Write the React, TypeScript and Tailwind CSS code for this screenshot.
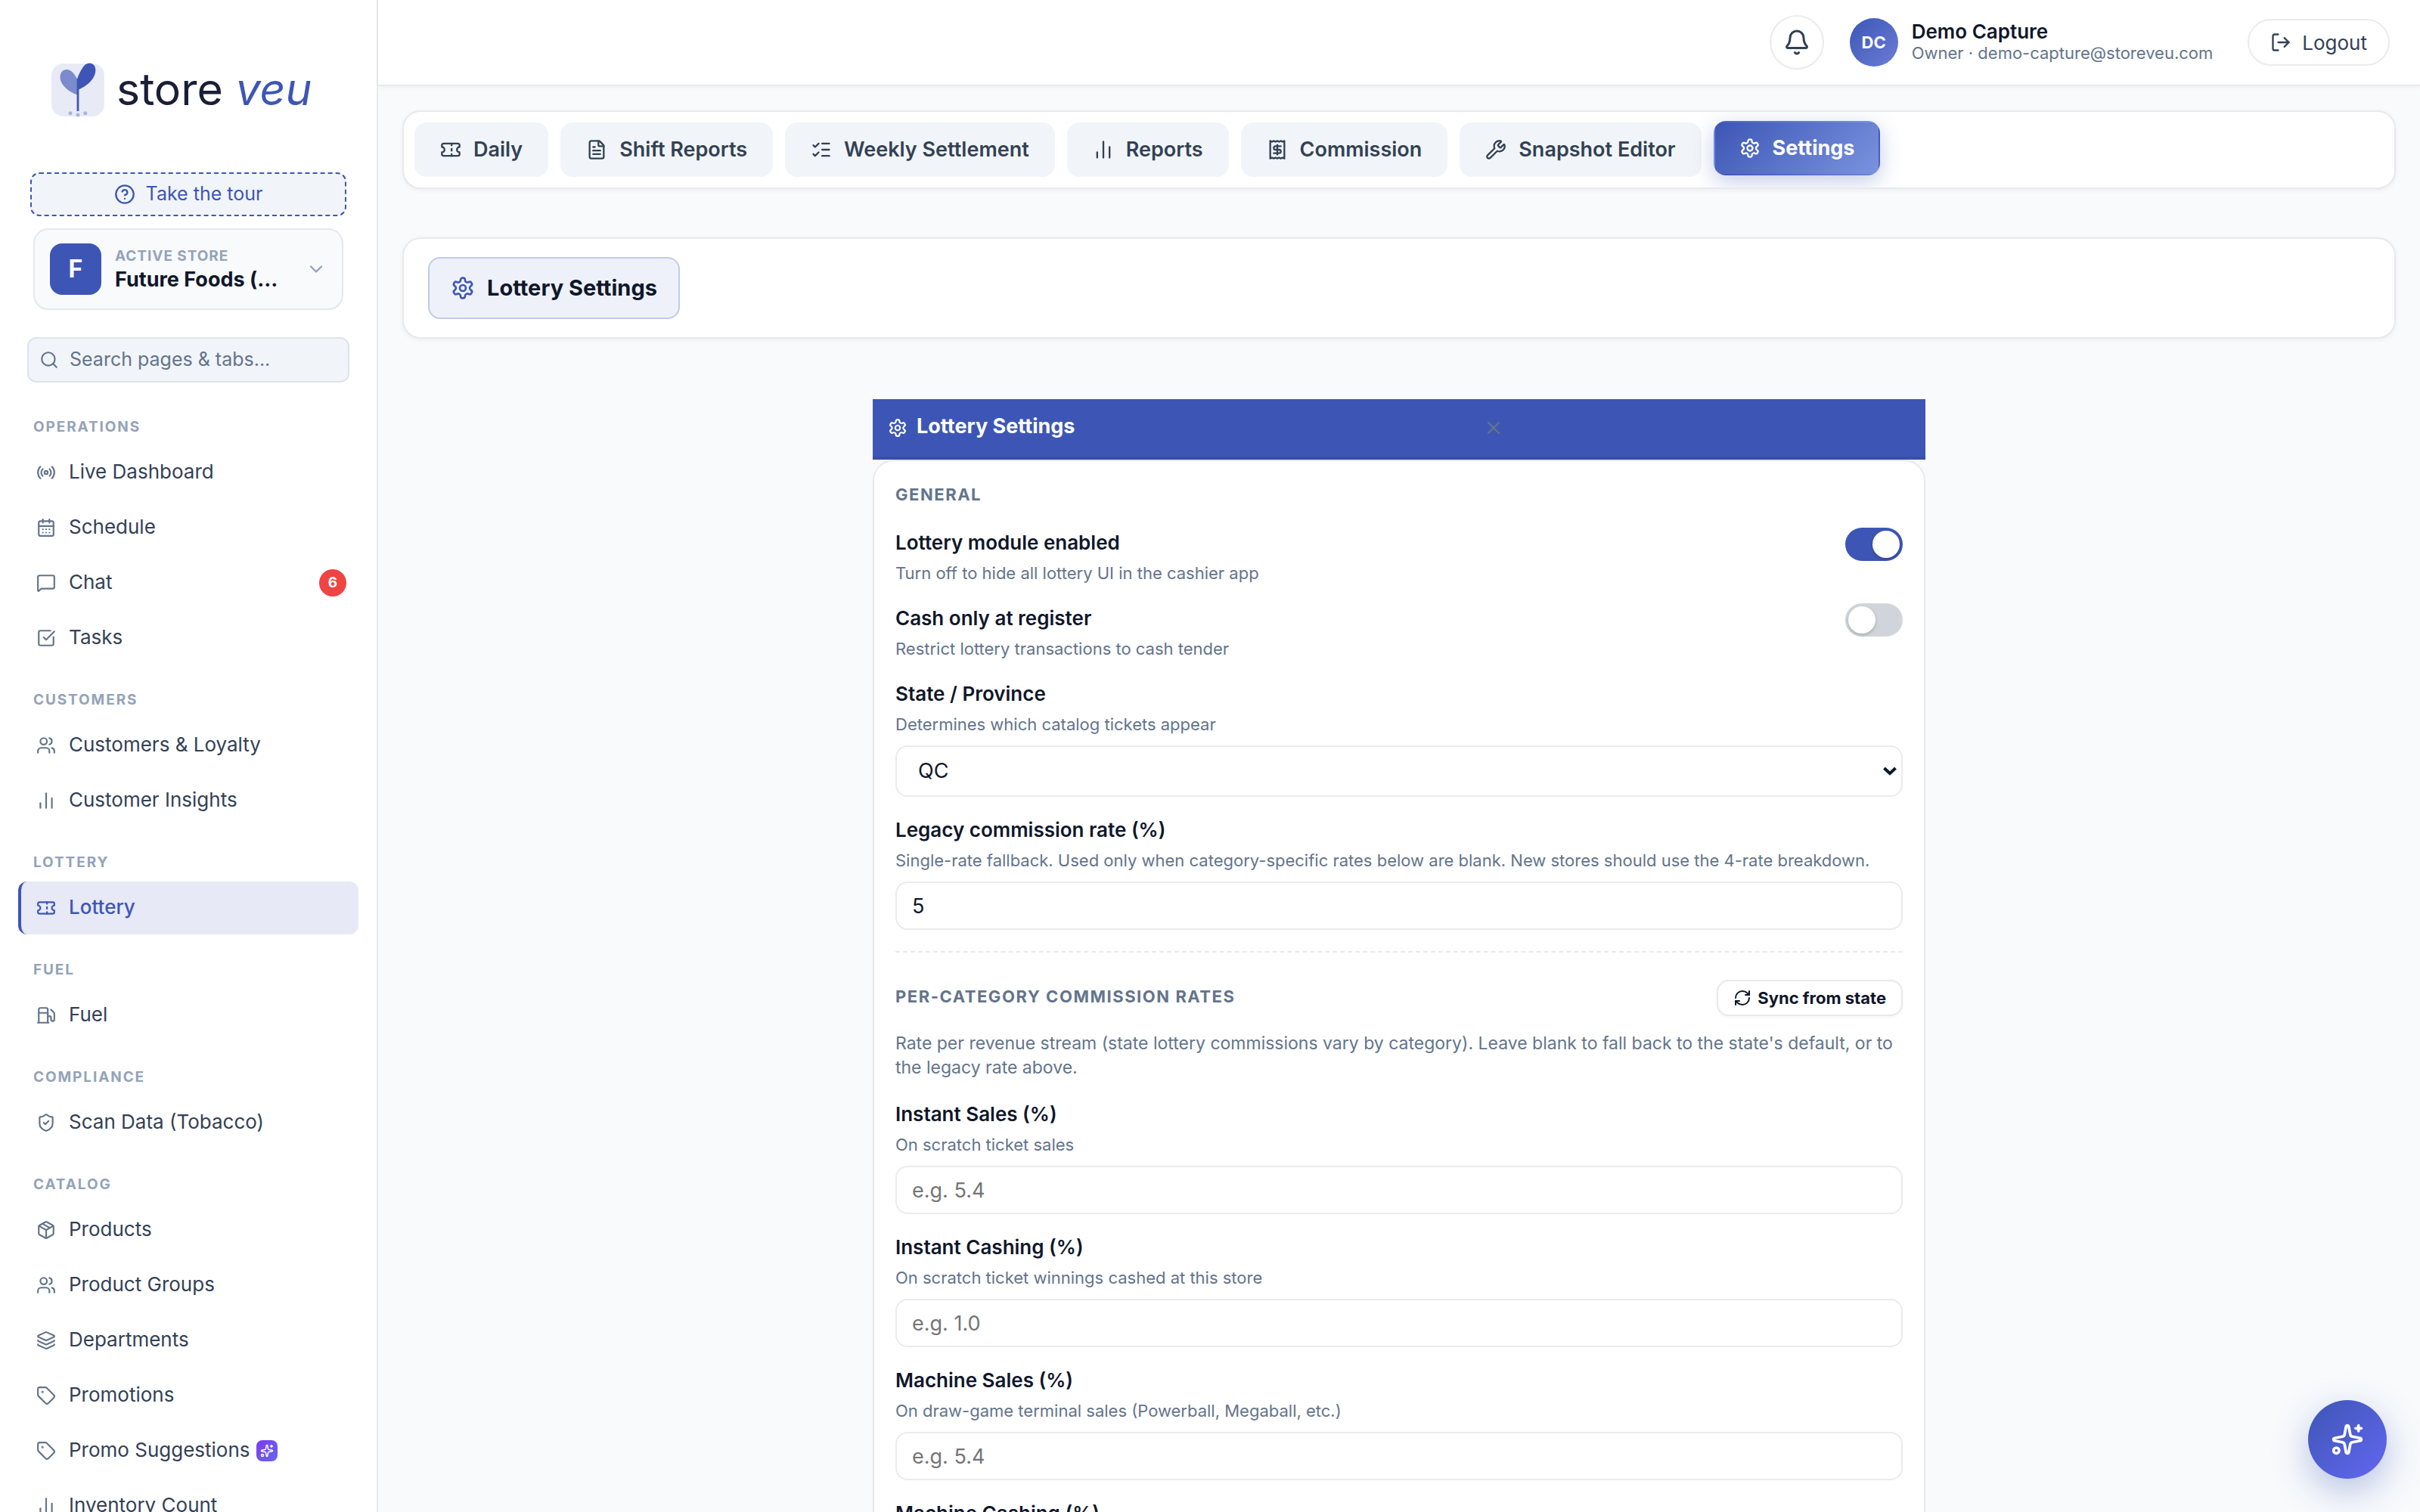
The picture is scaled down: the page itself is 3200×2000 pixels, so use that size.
import type { ReactNode } from "react";
import {
  Bell,
  CalendarDays,
  ChartNoAxesColumn,
  ChevronDown,
  CircleQuestionMark,
  FileText,
  Fuel,
  Layers,
  ListChecks,
  MessageSquare,
  Package,
  Radio,
  RefreshCw,
  Search,
  ShieldCheck,
  Sparkles,
  SquareCheckBig,
  Tag,
  Users,
  Wrench,
  X,
} from "lucide-react";

type IconType = (props: { size?: number; className?: string; strokeWidth?: number }) => ReactNode;

function makeIcon(body: ReactNode): IconType {
  return ({ size = 24, className, strokeWidth = 2 }) => (
    <svg
      width={size}
      height={size}
      viewBox="0 0 24 24"
      fill="none"
      stroke="currentColor"
      strokeWidth={strokeWidth}
      strokeLinecap="round"
      strokeLinejoin="round"
      className={className}
      aria-hidden="true"
    >
      {body}
    </svg>
  );
}

const TicketIcon = makeIcon(
  <>
    <path d="M2 9a3 3 0 0 1 0 6v2a2 2 0 0 0 2 2h16a2 2 0 0 0 2-2v-2a3 3 0 0 1 0-6V7a2 2 0 0 0-2-2H4a2 2 0 0 0-2 2Z" />
    <path d="M13 5v2" />
    <path d="M13 17v2" />
    <path d="M13 11v2" />
  </>,
);

const ReceiptIcon = makeIcon(
  <>
    <path d="M4 2v20l2-1 2 1 2-1 2 1 2-1 2 1 2-1 2 1V2l-2 1-2-1-2 1-2-1-2 1-2-1-2 1Z" />
    <path d="M16 8h-6a2 2 0 1 0 0 4h4a2 2 0 1 1 0 4H8" />
    <path d="M12 17.5v-11" />
  </>,
);

const GearIcon = makeIcon(
  <>
    <path d="M12.22 2h-.44a2 2 0 0 0-2 2v.18a2 2 0 0 1-1 1.73l-.43.25a2 2 0 0 1-2 0l-.15-.08a2 2 0 0 0-2.73.73l-.22.38a2 2 0 0 0 .73 2.73l.15.1a2 2 0 0 1 1 1.72v.51a2 2 0 0 1-1 1.74l-.15.09a2 2 0 0 0-.73 2.73l.22.38a2 2 0 0 0 2.73.73l.15-.08a2 2 0 0 1 2 0l.43.25a2 2 0 0 1 1 1.73V20a2 2 0 0 0 2 2h.44a2 2 0 0 0 2-2v-.18a2 2 0 0 1 1-1.73l.43-.25a2 2 0 0 1 2 0l.15.08a2 2 0 0 0 2.73-.73l.22-.39a2 2 0 0 0-.73-2.73l-.15-.08a2 2 0 0 1-1-1.74v-.5a2 2 0 0 1 1-1.74l.15-.09a2 2 0 0 0 .73-2.73l-.22-.38a2 2 0 0 0-2.73-.73l-.15.08a2 2 0 0 1-2 0l-.43-.25a2 2 0 0 1-1-1.73V4a2 2 0 0 0-2-2z" />
    <circle cx="12" cy="12" r="3" />
  </>,
);

const LogOutIcon = makeIcon(
  <>
    <path d="m16 17 5-5-5-5" />
    <path d="M21 12H9" />
    <path d="M9 21H5a2 2 0 0 1-2-2V5a2 2 0 0 1 2-2h4" />
  </>,
);

type NavItem = { label: string; icon: IconType; active?: boolean; count?: number; ai?: boolean };

const sections: { title: string; items: NavItem[] }[] = [
  {
    title: "OPERATIONS",
    items: [
      { label: "Live Dashboard", icon: Radio },
      { label: "Schedule", icon: CalendarDays },
      { label: "Chat", icon: MessageSquare, count: 6 },
      { label: "Tasks", icon: SquareCheckBig },
    ],
  },
  {
    title: "CUSTOMERS",
    items: [
      { label: "Customers & Loyalty", icon: Users },
      { label: "Customer Insights", icon: ChartNoAxesColumn },
    ],
  },
  { title: "LOTTERY", items: [{ label: "Lottery", icon: TicketIcon, active: true }] },
  { title: "FUEL", items: [{ label: "Fuel", icon: Fuel }] },
  { title: "COMPLIANCE", items: [{ label: "Scan Data (Tobacco)", icon: ShieldCheck }] },
  {
    title: "CATALOG",
    items: [
      { label: "Products", icon: Package },
      { label: "Product Groups", icon: Users },
      { label: "Departments", icon: Layers },
      { label: "Promotions", icon: Tag },
      { label: "Promo Suggestions", icon: Tag, ai: true },
      { label: "Inventory Count", icon: ChartNoAxesColumn },
    ],
  },
];

const tabs: { label: string; icon: IconType; active?: boolean }[] = [
  { label: "Daily", icon: TicketIcon },
  { label: "Shift Reports", icon: FileText },
  { label: "Weekly Settlement", icon: ListChecks },
  { label: "Reports", icon: ChartNoAxesColumn },
  { label: "Commission", icon: ReceiptIcon },
  { label: "Snapshot Editor", icon: Wrench },
  { label: "Settings", icon: GearIcon, active: true },
];

const rates = [
  { id: "instant-sales", label: "Instant Sales (%)", hint: "On scratch ticket sales", placeholder: "e.g. 5.4" },
  { id: "instant-cashing", label: "Instant Cashing (%)", hint: "On scratch ticket winnings cashed at this store", placeholder: "e.g. 1.0" },
  { id: "machine-sales", label: "Machine Sales (%)", hint: "On draw-game terminal sales (Powerball, Megaball, etc.)", placeholder: "e.g. 5.4" },
  { id: "machine-cashing", label: "Machine Cashing (%)", hint: "On draw-game winnings cashed at this store", placeholder: "e.g. 1.0" },
];

function LogoMark() {
  return (
    <svg width="70" height="70" viewBox="0 0 70 70" className="shrink-0 overflow-visible" aria-hidden="true">
      <rect width="70" height="70" rx="16" fill="#e8eaf5" />
      <path d="M34.5 41.5C24 38 11.5 29 11.5 18C11.5 12 15 8 20 8C27 8 31 15 34.5 21Z" fill="#7b8bcb" />
      <path d="M34.5 35V19C38 10 43 -0.5 50.3 -0.5C55 -0.5 58.3 3 58.3 9C58.3 20 47 30 34.5 35Z" fill="#3d56b5" />
      <path d="M35 20V63" stroke="#3d56b5" strokeWidth="2.8" />
      <circle cx="25" cy="65.8" r="2.5" fill="#a9b4de" />
      <circle cx="35" cy="67.9" r="2.5" fill="#a9b4de" />
      <circle cx="44.8" cy="65.8" r="2.5" fill="#a9b4de" />
    </svg>
  );
}

function Sidebar() {
  return (
    <aside className="flex w-[500px] shrink-0 flex-col overflow-hidden border-r-2 border-[#e9e9eb] bg-white px-6">
      <div className="flex h-[154px] shrink-0 items-end gap-4 pl-11">
        <LogoMark />
        <p className="text-[59px] leading-[72px] whitespace-nowrap text-[#1a1f36]">
          store <em className="text-[#3d56b5]">veu</em>
        </p>
      </div>

      <button
        type="button"
        className="mx-4 mt-[74px] flex h-[58px] shrink-0 items-center justify-center gap-3.5 rounded-xl border-2 border-dashed border-[#3d56b5] bg-[#f1f5f9] text-[25px] text-[#3d56b5]"
      >
        <CircleQuestionMark size={28} />
        Take the tour
      </button>

      <button
        type="button"
        className="mx-5 mt-4 flex h-27 shrink-0 items-center gap-[18px] rounded-[20px] border-2 border-[#e6e7ea] bg-[#f8fafc] px-5 text-left"
      >
        <span className="grid size-17 shrink-0 place-items-center rounded-2xl bg-[#3d56b5] text-[32px] font-bold text-white">F</span>
        <span className="min-w-0 flex-1">
          <span className="block text-[19px] leading-7 font-bold tracking-wider text-[#94a3b8]">ACTIVE STORE</span>
          <span className="block truncate text-[27px] leading-[34px] font-bold text-[#0f172a]">Future Foods (…</span>
        </span>
        <ChevronDown size={28} className="shrink-0 text-[#94a3b8]" />
      </button>

      <label className="mx-3 mt-9 flex h-[60px] shrink-0 items-center gap-3.5 rounded-xl border-2 border-[#dfe3e8] bg-[#f1f5f9] px-3.5 text-[#64748b]">
        <Search size={26} className="shrink-0" />
        <input
          type="search"
          aria-label="Search pages and tabs"
          placeholder="Search pages & tabs..."
          className="w-full bg-transparent text-[25px] outline-none placeholder:text-[#64748b]"
        />
      </label>

      <nav className="mt-3">
        {sections.map((section) => (
          <section key={section.title}>
            <h2 className="px-5 pt-[35px] pb-[13px] text-[19px] leading-6 font-bold tracking-widest text-[#94a3b8]">
              {section.title}
            </h2>
            <ul className="flex flex-col gap-[3px]">
              {section.items.map(({ label, icon: Icon, active, count, ai }) => (
                <li key={label}>
                  <a
                    href="#"
                    className={
                      active
                        ? "flex h-[70px] items-center rounded-xl border-l-4 border-[#3d56b5] bg-[#e7e9f6] pr-4 pl-5 text-[26px] font-medium text-[#3d56b5]"
                        : "flex h-[70px] items-center rounded-xl border-l-4 border-transparent pr-4 pl-5 text-[26px] text-[#334155]"
                    }
                  >
                    <Icon size={26} className={active ? "shrink-0" : "shrink-0 text-[#64748b]"} />
                    <span className="pb-1 pl-[17px]">{label}</span>
                    {ai && (
                      <span className="ml-2 grid size-7 place-items-center rounded-lg bg-linear-135 from-[#7c3aed] to-[#6366f1] text-white">
                        <Sparkles size={18} />
                      </span>
                    )}
                    {count && (
                      <span className="ml-auto grid size-9 place-items-center rounded-full bg-[#ef4444] text-[19px] font-bold text-white">
                        {count}
                      </span>
                    )}
                  </a>
                </li>
              ))}
            </ul>
          </section>
        ))}
      </nav>
    </aside>
  );
}

function TopBar() {
  return (
    <header className="z-10 flex h-[114px] shrink-0 items-center justify-end border-b-2 border-[#e9e9eb] bg-white pr-10 shadow-[0_2px_6px_rgba(15,23,42,0.04)]">
      <button
        type="button"
        aria-label="Notifications"
        className="grid size-18 place-items-center rounded-full border-2 border-[#ebebeb] text-[#334155]"
      >
        <Bell size={36} />
      </button>
      <div className="ml-[34px] grid size-16 place-items-center rounded-full bg-linear-135 from-[#3d56b5] to-[#6b7dd6] text-[22px] font-bold text-white">
        DC
      </div>
      <div className="ml-[18px]">
        <p className="text-[26px] leading-7 font-semibold text-[#0f172a]">Demo Capture</p>
        <p className="text-[22px] leading-7 text-[#64748b]">Owner · demo-capture@storeveu.com</p>
      </div>
      <button
        type="button"
        className="ml-[46px] flex h-[62px] items-center gap-3.5 rounded-full border-2 border-[#ebebeb] px-7 text-[26px] text-[#334155]"
      >
        <LogOutIcon size={28} />
        Logout
      </button>
    </header>
  );
}

function TabBar() {
  return (
    <div className="flex gap-4 overflow-hidden rounded-3xl border-2 border-[#e9e9eb] bg-white p-3.5 shadow-[0_2px_6px_rgba(15,23,42,0.05)]">
      {tabs.map(({ label, icon: Icon, active }) => (
        <button
          key={label}
          type="button"
          className={
            active
              ? "flex h-18 -translate-y-0.5 items-center gap-4 rounded-2xl border-2 border-transparent bg-linear-135 from-[#3d56b5] to-[#7b93de] px-8 text-[27px] font-bold text-white shadow-[0_8px_28px_rgba(61,86,181,0.3)]"
              : "flex h-18 items-center gap-4 rounded-2xl border-2 border-transparent bg-[#f1f5f9] px-8 text-[27px] font-semibold text-[#334155]"
          }
        >
          <Icon size={28} />
          {label}
        </button>
      ))}
    </div>
  );
}

function Toggle({ id, label, hint, on }: { id: string; label: string; hint: string; on: boolean }) {
  return (
    <div className="flex items-start justify-between">
      <div>
        <label htmlFor={id} className="block text-[26px] leading-10 font-semibold text-[#0f172a]">
          {label}
        </label>
        <p className="mt-1 text-[22px] leading-8 text-[#64748b]">{hint}</p>
      </div>
      <span className="relative flex">
        <input
          id={id}
          type="checkbox"
          role="switch"
          defaultChecked={on}
          className="peer h-11 w-[76px] cursor-pointer appearance-none rounded-full bg-[#d1d5db] checked:bg-[#3d56b5]"
        />
        <span className="pointer-events-none absolute top-1 left-1 size-9 rounded-full bg-white shadow-[0_2px_4px_rgba(0,0,0,0.2)] peer-checked:left-9" />
      </span>
    </div>
  );
}

function Field({ id, label, hint, children }: { id: string; label: string; hint: string; children: ReactNode }) {
  return (
    <div>
      <label htmlFor={id} className="block text-[26px] leading-10 font-semibold text-[#0f172a]">
        {label}
      </label>
      <p className="mt-1 mb-3 text-[22px] leading-8 text-[#64748b]">{hint}</p>
      {children}
    </div>
  );
}

function TextBox({ id, value, placeholder }: { id: string; value?: string; placeholder?: string }) {
  return (
    <input
      id={id}
      type="text"
      inputMode="decimal"
      defaultValue={value}
      placeholder={placeholder}
      className="block h-16 w-full rounded-2xl border-2 border-[#ebebeb] bg-white px-5 text-[27px] text-[#0f172a] outline-none placeholder:text-[#757575]"
    />
  );
}

function SettingsPanel() {
  return (
    <section className="mx-auto mt-20 w-full max-w-[1392px]">
      <header className="border-b-4 border-[#394fa8] bg-[#3d56b5]">
        <div className="flex h-[76px] w-3/5 items-center justify-between pl-5">
          <h2 className="flex items-center gap-3 text-[27px] font-bold text-white">
            <GearIcon size={26} />
            <span className="pb-1">Lottery Settings</span>
          </h2>
          <button type="button" aria-label="Close" className="text-[#64748b]">
            <X size={28} />
          </button>
        </div>
      </header>

      <form className="rounded-[28px] border-2 border-[#e9e9eb] bg-white p-7">
        <h3 className="mb-7 text-[22px] leading-8 font-bold tracking-[0.07em] text-[#64748b]">GENERAL</h3>
        <div className="flex flex-col gap-6">
          <Toggle id="module-enabled" label="Lottery module enabled" hint="Turn off to hide all lottery UI in the cashier app" on />
          <Toggle id="cash-only" label="Cash only at register" hint="Restrict lottery transactions to cash tender" on={false} />
          <Field id="state" label="State / Province" hint="Determines which catalog tickets appear">
            <div className="relative">
              <select
                id="state"
                defaultValue="QC"
                className="block h-17 w-full appearance-none rounded-2xl border-2 border-[#ebebeb] bg-white px-7 text-[27px] text-[#0f172a] outline-none"
              >
                <option>QC</option>
                <option>ON</option>
              </select>
              <svg
                width="18"
                height="12"
                viewBox="0 0 18 12"
                className="pointer-events-none absolute top-7 right-2"
                aria-hidden="true"
              >
                <path d="M1.5 2L9 9L16.5 2" fill="none" stroke="#0f172a" strokeWidth="4" />
              </svg>
            </div>
          </Field>
          <Field
            id="legacy-rate"
            label="Legacy commission rate (%)"
            hint="Single-rate fallback. Used only when category-specific rates below are blank. New stores should use the 4-rate breakdown."
          >
            <TextBox id="legacy-rate" value="5" />
          </Field>
        </div>

        <div className="mt-7 flex items-center justify-between border-t-2 border-dashed border-[#e9e9eb] pt-9">
          <h3 className="pb-1 text-[22px] leading-8 font-bold tracking-[0.07em] text-[#64748b]">PER-CATEGORY COMMISSION RATES</h3>
          <button
            type="button"
            className="flex h-12 items-center gap-2 rounded-2xl border-2 border-[#e9e9eb] bg-white px-5 text-[22px] font-bold text-[#0f172a] shadow-[0_2px_4px_rgba(15,23,42,0.04)]"
          >
            <RefreshCw size={24} />
            Sync from state
          </button>
        </div>
        <p className="mt-5 mb-[26px] text-[23px] leading-8 text-[#64748b]">
          Rate per revenue stream (state lottery commissions vary by category). Leave blank to fall back to the state's default, or to
          the legacy rate above.
        </p>
        <div className="flex flex-col gap-6">
          {rates.map((rate) => (
            <Field key={rate.id} id={rate.id} label={rate.label} hint={rate.hint}>
              <TextBox id={rate.id} placeholder={rate.placeholder} />
            </Field>
          ))}
        </div>
      </form>
    </section>
  );
}

export default function App() {
  return (
    <div className="flex h-screen overflow-hidden bg-[#f8fafc] font-['Inter',sans-serif]">
      <Sidebar />
      <div className="flex min-w-0 flex-1 flex-col">
        <TopBar />
        <main className="flex-1 overflow-y-auto p-8 [scrollbar-width:none]">
          <TabBar />
          <div className="mt-16 rounded-3xl border-2 border-[#e9e9eb] bg-white px-8 py-6 shadow-[0_2px_6px_rgba(15,23,42,0.05)]">
            <button
              type="button"
              className="flex h-[82px] items-center gap-4 rounded-2xl border-2 border-[#c1caeb] bg-[#eef1fa] px-7 text-[29px] font-bold text-[#0f172a]"
            >
              <GearIcon size={32} className="text-[#3d56b5]" />
              Lottery Settings
            </button>
          </div>
          <SettingsPanel />
        </main>
      </div>
      <button
        type="button"
        aria-label="Open AI assistant"
        className="fixed right-11 bottom-11 z-20 grid size-26 place-items-center rounded-full bg-linear-135 from-[#3d56b5] to-[#6366f1] text-white shadow-[0_16px_48px_rgba(61,86,181,0.35)]"
      >
        <Sparkles size={44} />
      </button>
    </div>
  );
}
